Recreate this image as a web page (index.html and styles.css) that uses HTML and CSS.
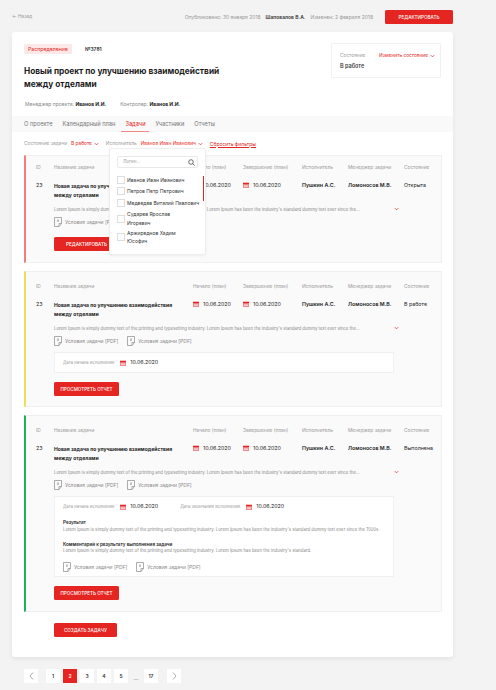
FILE: index.html
```html
<!DOCTYPE html>
<html lang="ru">
<head>
    <meta charset="UTF-8">
    <title>Новый проект</title>
    <link rel="stylesheet" href="styles.css">
</head>
<body>
    <svg class="sprite" width="0" height="0">
        <symbol id="cal" viewBox="0 0 6 6">
            <path d="M0 .8h6V6H0z" fill="#f08a8a"/>
            <path d="M0 .8h6v1.4H0z" fill="#e52521"/>
            <path d="M1 3h4v.6H1zM1 4.3h4v.6H1z" fill="#fff" opacity=".7"/>
        </symbol>
        <symbol id="file" viewBox="0 0 8 10">
            <path d="M.5.5h7v6L5 9.5H.5z" fill="none" stroke="#8a8a8a" stroke-width=".7"/>
            <path d="M7.5 6.500H5v3" fill="none" stroke="#8a8a8a" stroke-width=".7"/>
            <path d="M4 2.500v2.500" stroke="#555" stroke-width=".7"/>
        </symbol>
        <symbol id="chev" viewBox="0 0 6 4">
            <path d="M1 1l2 2 2-2" fill="none" stroke="currentColor" stroke-width=".9"/>
        </symbol>
    </svg>

    <div class="topbar">
        <a class="back">← Назад</a>
        <div class="meta">
            <span>Опубликовано: 30 января 2018</span>
            <b>Шаповалов В.А.</b>
            <span>Изменен: 2 февраля 2018</span>
        </div>
        <button class="btn btn-top">РЕДАКТИРОВАТЬ</button>
    </div>

    <div class="card">
        <div class="head">
            <div class="head-main">
                <div class="tags"><span class="tag">Распределение</span><b class="num">№3781</b></div>
                <h1>Новый проект по улучшению взаимодействий между отделами</h1>
                <div class="people">
                    <span>Менеджер проекта: <b>Иванов И.И.</b></span>
                    <span>Контролер: <b>Иванов И.И.</b></span>
                </div>
            </div>
            <div class="state-box">
                <div class="state-row">
                    <span class="muted">Состояние</span>
                    <span class="red">Изменить состояние <svg class="chev"><use href="#chev"/></svg></span>
                </div>
                <b class="state-val">В работе</b>
            </div>
        </div>

        <div class="tabs">
            <span>О проекте</span>
            <span>Календарный план</span>
            <span class="tab-on">Задачи</span>
            <span>Участники</span>
            <span>Отчеты</span>
        </div>

        <div class="filters">
            <span class="muted">Состояние задачи</span>
            <span class="red">В работе <svg class="chev"><use href="#chev"/></svg></span>
            <span class="muted">Исполнитель</span>
            <span class="red">Иванов Иван Иванович <svg class="chev"><use href="#chev"/></svg></span>
            <a class="reset">Сбросить фильтры</a>
        </div>

        <div class="dropdown">
            <div class="search"><span>Логин...</span>
                <svg width="7" height="7" viewBox="0 0 7 7"><circle cx="3" cy="3" r="2.300" fill="none" stroke="#333" stroke-width=".7"/><path d="M4.700 4.700L6.700 6.700" stroke="#333" stroke-width=".7"/></svg>
            </div>
            <div class="opt"><i></i><span>Иванов Иван Иванович</span></div>
            <div class="opt"><i></i><span>Петров Петр Петрович</span></div>
            <div class="opt"><i></i><span>Медведев Виталий Павлович</span></div>
            <div class="opt"><i></i><span>Сударев Ярослав<br>Игоревич</span></div>
            <div class="opt"><i></i><span>Аржиреднов Хадим<br>Юсофич</span></div>
            <div class="scroll"></div>
        </div>

        <div class="task task-red">
            <div class="grid">
                <span class="th">ID</span><span class="th">Название задачи</span><span class="th">Начало (план)</span><span class="th">Завершение (план)</span><span class="th">Исполнитель</span><span class="th">Менеджер задачи</span><span class="th">Состояние</span>
                <span class="td">23</span>
                <b class="name">Новая задача по улучшению взаимодействия между отделами</b>
                <span class="td date"><svg class="cal"><use href="#cal"/></svg>10.06.2020</span>
                <span class="td date"><svg class="cal"><use href="#cal"/></svg>10.06.2020</span>
                <b class="td">Пушкин А.С.</b>
                <b class="td">Ломоносов М.В.</b>
                <span class="td">Открыта</span>
            </div>
            <div class="desc"><span>Lorem Ipsum is simply dummy text of the printing and typesetting industry. Lorem Ipsum has been the industry's standard dummy text ever since the...</span><svg class="chev-red"><use href="#chev"/></svg></div>
            <div class="files">
                <span class="doc"><svg class="ficon"><use href="#file"/></svg>Условия задачи [PDF]</span>
            </div>
            <button class="btn btn-task">РЕДАКТИРОВАТЬ</button>
        </div>

        <div class="task task-yellow">
            <div class="grid">
                <span class="th">ID</span><span class="th">Название задачи</span><span class="th">Начало (план)</span><span class="th">Завершение (план)</span><span class="th">Исполнитель</span><span class="th">Менеджер задачи</span><span class="th">Состояние</span>
                <span class="td">23</span>
                <b class="name">Новая задача по улучшению взаимодействия между отделами</b>
                <span class="td date"><svg class="cal"><use href="#cal"/></svg>10.06.2020</span>
                <span class="td date"><svg class="cal"><use href="#cal"/></svg>10.06.2020</span>
                <b class="td">Пушкин А.С.</b>
                <b class="td">Ломоносов М.В.</b>
                <span class="td">В работе</span>
            </div>
            <div class="desc"><span>Lorem Ipsum is simply dummy text of the printing and typesetting industry. Lorem Ipsum has been the industry's standard dummy text ever since the...</span><svg class="chev-red"><use href="#chev"/></svg></div>
            <div class="files">
                <span class="doc"><svg class="ficon"><use href="#file"/></svg>Условия задачи [PDF]</span>
                <span class="doc"><svg class="ficon"><use href="#file"/></svg>Условия задачи [PDF]</span>
            </div>
            <div class="panel">
                <div class="dates">
                    <span class="small">Дата начала исполнения</span>
                    <span class="td date"><svg class="cal"><use href="#cal"/></svg>10.06.2020</span>
                </div>
            </div>
            <button class="btn btn-task">ПРОСМОТРЕТЬ ОТЧЕТ</button>
        </div>

        <div class="task task-green">
            <div class="grid">
                <span class="th">ID</span><span class="th">Название задачи</span><span class="th">Начало (план)</span><span class="th">Завершение (план)</span><span class="th">Исполнитель</span><span class="th">Менеджер задачи</span><span class="th">Состояние</span>
                <span class="td">23</span>
                <b class="name">Новая задача по улучшению взаимодействия между отделами</b>
                <span class="td date"><svg class="cal"><use href="#cal"/></svg>10.06.2020</span>
                <span class="td date"><svg class="cal"><use href="#cal"/></svg>10.06.2020</span>
                <b class="td">Пушкин А.С.</b>
                <b class="td">Ломоносов М.В.</b>
                <span class="td">Выполнена</span>
            </div>
            <div class="desc"><span>Lorem Ipsum is simply dummy text of the printing and typesetting industry. Lorem Ipsum has been the industry's standard dummy text ever since the...</span><svg class="chev-red"><use href="#chev"/></svg></div>
            <div class="files">
                <span class="doc"><svg class="ficon"><use href="#file"/></svg>Условия задачи [PDF]</span>
                <span class="doc"><svg class="ficon"><use href="#file"/></svg>Условия задачи [PDF]</span>
            </div>
            <div class="panel">
                <div class="dates">
                    <span class="small">Дата начала исполнения</span>
                    <span class="td date"><svg class="cal"><use href="#cal"/></svg>10.06.2020</span>
                    <span class="small">Дата окончания исполнения</span>
                    <span class="td date"><svg class="cal"><use href="#cal"/></svg>10.06.2020</span>
                </div>
                <div class="result">
                    <b>Результат</b>
                    <p>Lorem Ipsum is simply dummy text of the printing and typesetting industry. Lorem Ipsum has been the industry's standard dummy text ever since the 1500s.</p>
                </div>
                <div class="result">
                    <b>Комментарий к результату выполнения задачи</b>
                    <p>Lorem Ipsum is simply dummy text of the printing and typesetting industry. Lorem Ipsum has been the industry's standard.</p>
                </div>
                <div class="files files-in">
                    <span class="doc"><svg class="ficon"><use href="#file"/></svg>Условия задачи [PDF]</span>
                    <span class="doc"><svg class="ficon"><use href="#file"/></svg>Условия задачи [PDF]</span>
                </div>
            </div>
            <button class="btn btn-task">ПРОСМОТРЕТЬ ОТЧЕТ</button>
        </div>

        <button class="btn btn-create">СОЗДАТЬ ЗАДАЧУ</button>
    </div>

    <div class="pager">
        <span class="page arrow"><svg width="5" height="8" viewBox="0 0 5 8"><path d="M4 .5L1 4l3 3.500" fill="none" stroke="#888" stroke-width=".7"/></svg></span>
        <span class="page">1</span>
        <span class="page page-on">2</span>
        <span class="page">3</span>
        <span class="page">4</span>
        <span class="page">5</span>
        <span class="dots">...</span>
        <span class="page">17</span>
        <span class="page arrow"><svg width="5" height="8" viewBox="0 0 5 8"><path d="M1 .5L4 4 1 7.500" fill="none" stroke="#888" stroke-width=".7"/></svg></span>
    </div>
</body>
</html>
```
FILE: styles.css
```css
* { box-sizing: border-box; }
html, body { margin: 0; padding: 0; }
body { width: 496px; height: 690px; overflow: hidden; background: #f3f3f3; color: #1c1c1c; font-family: Inter, "Open Sans", sans-serif; font-size: 5px; line-height: 1.2; }
b { font-weight: 700; }
.sprite { position: absolute; }
.muted { color: #999; }
.red { color: #e52521; display: inline-flex; align-items: center; gap: 2px; }
.chev { width: 5px; height: 4px; color: #e52521; }

.btn { display: block; border: none; border-radius: 1.500px; background: #e52521; color: #fff; font-family: inherit; font-size: 4.600px; font-weight: 500; padding: 0; text-align: center; }

.topbar { display: flex; align-items: center; height: 14px; margin: 10px 43px 8px 12px; }
.back { color: #999; font-size: 4.800px; }
.meta { margin-left: auto; display: flex; gap: 5px; color: #999; font-size: 5px; }
.meta b { color: #333; font-weight: 600; }
.btn-top { width: 68px; height: 14px; margin-left: 12px; }

.card { position: relative; width: 441px; height: 625px; margin-left: 12px; background: #fff; border-radius: 3px; box-shadow: 0 2px 5px rgba(0,0,0,.07); }
.head { position: relative; display: flex; justify-content: space-between; height: 84px; padding: 12px 12px 0 12px; }
.head-main { width: 210px; }
.tags { display: flex; align-items: center; gap: 13px; height: 10px; }
.tag { display: block; padding: 2px 4px; border-radius: 1px; background: #fde8e8; color: #e52521; font-size: 5.200px; }
.num { font-size: 5px; font-weight: 600; }
h1 { margin: 11px 0 0; font-size: 8.300px; line-height: 12.500px; font-weight: 700; }
.people { display: flex; gap: 14px; margin-top: 11px; padding-left: 1px; color: #888; font-size: 5px; }
.people b { color: #222; }
.state-box { width: 110px; height: 35px; margin-top: -1px; padding: 9px 5px 0 8px; border: 1px solid #f1f1f1; border-radius: 1px; }
.state-row { display: flex; justify-content: space-between; font-size: 4.800px; }
.state-val { display: block; margin-top: 4px; font-size: 5.500px; font-weight: 600; color: #444; }

.tabs { display: flex; gap: 10px; height: 16px; padding-left: 12px; align-items: center; background: #f9f9f9; color: #777; font-size: 5.700px; }
.tab-on { position: relative; color: #e52521; }
.tab-on::after { content: ""; position: absolute; left: -4px; right: -3px; bottom: -5px; height: 1px; background: #f08a8a; }

.filters { display: flex; align-items: center; gap: 4px; height: 23px; padding-left: 12px; font-size: 4.800px; }
.filters .muted + .red + .muted { margin-left: 3px; }
.reset { margin-left: 3px; color: #e52521; font-size: 5px; text-decoration: underline; }

.dropdown { position: absolute; left: 97px; top: 116px; width: 97px; height: 107px; padding: 7px; background: #fff; border: 1px solid #eee; border-radius: 2px; z-index: 2; box-shadow: 0 1px 3px rgba(0,0,0,.05); }
.search { display: flex; justify-content: space-between; align-items: center; height: 12px; padding: 0 2px 0 5px; border: 1px solid #e8e8e8; border-radius: 2px; color: #999; font-size: 4.500px; margin-bottom: 6px; }
.opt { display: flex; align-items: center; gap: 2px; min-height: 11.500px; font-size: 5px; line-height: 8.500px; color: #333; white-space: nowrap; }
.opt i { flex: none; width: 8px; height: 8px; border: 1px solid #ddd; }
.opt:nth-of-type(n+5) { margin-top: 1.500px; }
.scroll { position: absolute; right: 1px; top: 27px; width: 1px; height: 25px; background: #e52521; }

.task { margin: 0 11px 8px 12px; padding: 12px 0 0 10px; background: #fafafa; border: 1px solid #f0f0f0; border-left: 2px solid #ccc; }
.task-red { height: 108px; padding-top: 9px; border-left-color: #f47c7c; }
.task-yellow { height: 136px; border-left-color: #ecdd5c; }
.task-green { height: 197px; border-left-color: #1fb157; }

.grid { display: grid; grid-template-columns: 18px 139px 50px 59px 46px 56px 1fr; grid-template-rows: 7px auto; row-gap: 10px; }
.th { color: #999; font-size: 4.800px; }
.td { font-size: 5.300px; }
b.td { font-weight: 600; }
.date { display: inline-flex; align-items: center; align-self: start; gap: 4px; }
.cal { width: 6px; height: 6px; flex: none; }
.name { font-size: 5.100px; line-height: 9px; font-weight: 700; padding-right: 10px; }

.desc { position: relative; display: flex; align-items: center; margin: 6.500px 0 0 18px; width: 345px; color: #888; font-size: 4.300px; white-space: nowrap; justify-content: space-between; }
.chev-red { width: 5px; height: 4px; color: #e52521; flex: none; }
.files { display: flex; gap: 9px; margin: 5px 0 0 18px; }
.doc { display: inline-flex; align-items: center; gap: 3px; color: #888; font-size: 5px; }
.ficon { width: 8px; height: 10px; flex: none; }
.panel { margin: 6.500px 0 0 18px; width: 340px; padding: 4px 8px; background: #fff; border: 1px solid #f0f0f0; }
.dates { display: flex; align-items: center; gap: 6px; height: 11px; }
.dates .date { align-self: center; }
.small { color: #999; font-size: 4.200px; }
.dates .small + .date + .small { margin-left: 16px; font-size: 4.300px; }
.result { margin-top: 8px; font-size: 4.600px; }
.result + .result { margin-top: 10px; }
.result b { display: block; font-weight: 600; }
.result p { margin: 1px 0 0; color: #888; font-size: 4.300px; white-space: nowrap; }
.files-in { margin: 9px 0 0; }
.btn-task { width: 65px; height: 14px; margin: 9px 0 0 18px; }
.task-red .btn-task { margin-top: 10.500px; }
.btn-create { width: 63px; height: 14px; margin: 11px 0 0 42px; }

.pager { display: flex; align-items: center; gap: 3px; margin: 12px 0 0 24px; }
.page { display: flex; align-items: center; justify-content: center; width: 14px; height: 14px; background: #fff; color: #333; font-size: 5px; font-weight: 600; }
.page-on { background: #e52521; color: #fff; }
.arrow { margin-right: 5px; }
.dots { width: 10px; text-align: center; color: #777; padding-top: 4px; }
.dots + .page + .arrow { margin-left: 6px; margin-right: 0; }
```
